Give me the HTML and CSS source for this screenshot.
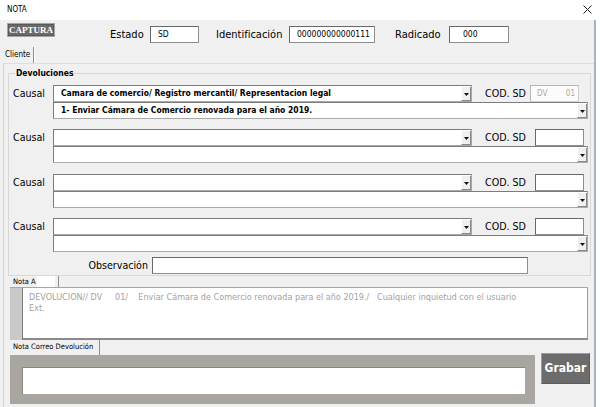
FILE: index.html
```html
<!DOCTYPE html>
<html lang="es">
<head>
<meta charset="utf-8">
<title>NOTA</title>
<link rel="stylesheet" href="styles.css">
</head>
<body>
<div class="window">
  <div class="titlebar">
    <span class="title">NOTA</span>
    <svg class="close" width="9" height="9" viewBox="0 0 9 9"><path d="M0.5 0.5 L8.5 8.5 M8.5 0.5 L0.5 8.5" stroke="#222" stroke-width="1" fill="none"/></svg>
  </div>
  <div class="client">
    <div class="toprow">
      <div class="btn-captura">CAPTURA</div>
      <span class="lbl lbl-estado">Estado</span>
      <div class="field f-estado">SD</div>
      <span class="lbl lbl-id">Identificación</span>
      <div class="field f-id">000000000000111</div>
      <span class="lbl lbl-rad">Radicado</span>
      <div class="field f-rad">000</div>
    </div>
    <div class="tabstrip"><div class="tab tab-cliente">Cliente</div></div>
    <div class="page">
      <div class="group">
        <div class="group-title">Devoluciones</div>

        <div class="causal r1">
          <div class="line1">
            <span class="lbl causal-lbl">Causal</span>
            <div class="combo combo-short"><span class="combo-text">Camara de comercio/ Registro mercantil/ Representacion legal</span><span class="dd"><svg width="5" height="3" viewBox="0 0 5 3"><path d="M0 0 H5 L2.5 3 Z" fill="#111"/></svg></span></div>
            <span class="lbl cod-lbl cod-lbl-first">COD. SD</span>
            <div class="field cod cod-disabled"><span>DV</span><span>01</span></div>
          </div>
          <div class="combo combo-long"><span class="combo-text">1- Enviar Cámara de Comercio renovada para el año 2019.</span><span class="dd"><svg width="5" height="3" viewBox="0 0 5 3"><path d="M0 0 H5 L2.5 3 Z" fill="#111"/></svg></span></div>
        </div>

        <div class="causal r2">
          <div class="line1">
            <span class="lbl causal-lbl">Causal</span>
            <div class="combo combo-short"><span class="combo-text"></span><span class="dd"><svg width="5" height="3" viewBox="0 0 5 3"><path d="M0 0 H5 L2.5 3 Z" fill="#111"/></svg></span></div>
            <span class="lbl cod-lbl">COD. SD</span>
            <div class="field cod"></div>
          </div>
          <div class="combo combo-long"><span class="combo-text"></span><span class="dd"><svg width="5" height="3" viewBox="0 0 5 3"><path d="M0 0 H5 L2.5 3 Z" fill="#111"/></svg></span></div>
        </div>

        <div class="causal r3">
          <div class="line1">
            <span class="lbl causal-lbl">Causal</span>
            <div class="combo combo-short"><span class="combo-text"></span><span class="dd"><svg width="5" height="3" viewBox="0 0 5 3"><path d="M0 0 H5 L2.5 3 Z" fill="#111"/></svg></span></div>
            <span class="lbl cod-lbl">COD. SD</span>
            <div class="field cod"></div>
          </div>
          <div class="combo combo-long"><span class="combo-text"></span><span class="dd"><svg width="5" height="3" viewBox="0 0 5 3"><path d="M0 0 H5 L2.5 3 Z" fill="#111"/></svg></span></div>
        </div>

        <div class="causal r4">
          <div class="line1">
            <span class="lbl causal-lbl">Causal</span>
            <div class="combo combo-short"><span class="combo-text"></span><span class="dd"><svg width="5" height="3" viewBox="0 0 5 3"><path d="M0 0 H5 L2.5 3 Z" fill="#111"/></svg></span></div>
            <span class="lbl cod-lbl">COD. SD</span>
            <div class="field cod"></div>
          </div>
          <div class="combo combo-long"><span class="combo-text"></span><span class="dd"><svg width="5" height="3" viewBox="0 0 5 3"><path d="M0 0 H5 L2.5 3 Z" fill="#111"/></svg></span></div>
        </div>

        <div class="obs-row">
          <span class="lbl obs-lbl">Observación</span>
          <div class="field obs"></div>
        </div>
      </div>

      <div class="tab tab-notaa">Nota A</div>
      <div class="nota-a">
        <div class="nota-a-box">
          <div class="nota-line">DEVOLUCION// DV     01/    Enviar Cámara de Comercio renovada para el año 2019./   Cualquier inquietud con el usuario</div>
          <div class="nota-line">Ext.</div>
        </div>
      </div>

      <div class="bottom">
        <div class="correo">
          <div class="tab tab-correo">Nota Correo Devolución</div>
          <div class="correo-panel"><div class="correo-input"></div></div>
        </div>
        <div class="btn-grabar">Grabar</div>
      </div>
    </div>
  </div>
</div>
</body>
</html>
```
FILE: styles.css
```css
* { box-sizing: border-box; }
html, body { margin: 0; padding: 0; background: #ffffff; }
body {
  font-family: "DejaVu Sans Condensed", "DejaVu Sans", sans-serif;
  font-stretch: condensed;
  color: #000;
}
.window { width: 600px; height: 407px; overflow: hidden; background: #fff; }

.titlebar {
  height: 20px;
  display: flex;
  align-items: center;
  justify-content: space-between;
  padding: 0 8px 0 7px;
  background: #fff;
}
.title { font-size: 8px; line-height: 10px; }
.close { display: block; margin-top: -1px; }

.client {
  width: 596px;
  height: 387px;
  background: #f0f0f0;
  border-right: 2px solid #a6b3c1;
}

.toprow {
  height: 27px;
  display: flex;
  align-items: flex-start;
  padding-left: 7px;
}
.btn-captura {
  margin-top: 3px;
  width: 48px;
  height: 14px;
  background: #6a6a6a;
  border: 1px solid #a4a4a4;
  outline: 1px solid #5a5a5a;
  outline-offset: -2px;
  color: #fff;
  font-family: "Liberation Serif", serif;
  font-weight: bold;
  font-size: 9px;
  line-height: 12px;
  text-align: center;
}
.lbl { font-size: 10.6px; line-height: 17px; white-space: nowrap; }
.toprow .lbl { margin-top: 6px; font-size: 11px; }
.lbl-estado { margin-left: 55px; width: 40px; }
.lbl-id { margin-left: 17px; width: 73px; }
.lbl-rad { margin-left: 20px; width: 54px; }

.field {
  height: 17px;
  background: #fff;
  border: 1px solid #8e8e8e;
  border-top-color: #686868;
  border-left-color: #686868;
  font-size: 8.5px;
  line-height: 15px;
  white-space: nowrap;
}
.toprow .field { margin-top: 6px; }
.f-estado { width: 49px; padding-left: 7px; }
.f-id { width: 86px; padding-left: 7px; }
.f-rad { width: 60px; padding-left: 13px; }

.tabstrip { height: 16px; padding-left: 3px; display: flex; }
.tab { font-size: 8px; white-space: nowrap; }
.tab-cliente {
  width: 31px;
  padding-left: 2px;
  line-height: 16px;
  border-right: 1px solid #8e8e8e;
  box-shadow: 1px 0 0 #ffffff;
}

.page {
  margin-left: 3px;
  width: 591px;
  height: 344px;
  border-left: 1px solid #d2d2d2;
  border-top: 1px solid #dedede;
  padding-top: 9px;
}

.group {
  margin-left: 4px;
  width: 583px;
  border: 1px solid #d8d8d8;
  padding: 0 0 1px 0;
}
.group-title {
  width: fit-content;
  margin: -6px 0 0 6px;
  padding: 0 1px;
  background: #f0f0f0;
  font-weight: bold;
  font-size: 8.5px;
  line-height: 11px;
}

.causal { padding-left: 4px; }
.causal.r1 { margin-top: 6px; }
.causal.r2 { margin-top: 10px; }
.causal.r3 { margin-top: 11px; }
.causal.r4 { margin-top: 10px; }
.line1 { display: flex; align-items: center; height: 17px; }
.causal-lbl { width: 40px; }

.combo {
  height: 17px;
  display: flex;
  align-items: stretch;
  background: #fff;
  border: 1px solid #a9a9a9;
  border-top-color: #7c7c7c;
  border-left-color: #7c7c7c;
}
.combo-short { width: 419px; }
.combo-long { width: 535px; margin-left: 40px; }
.combo-text {
  flex: 1;
  padding-left: 7px;
  font-weight: bold;
  font-size: 8.5px;
  line-height: 15px;
  white-space: nowrap;
  overflow: hidden;
}
.dd {
  width: 10px;
  margin: 1px 0 0 0;
  background: #f0f0f0;
  border-right: 1px solid #8a8a8a;
  border-bottom: 1px solid #8a8a8a;
  border-left: 1px solid #ffffff;
  display: flex;
  align-items: center;
  justify-content: center;
}
.dd svg { display: block; margin-top: 2px; }

.cod-lbl { margin-left: 13px; width: 50px; }
.cod-lbl-first { width: 45px; }
.cod { width: 49px; }
.cod-disabled {
  background: #fbfbfb;
  border-color: #cfcfcf;
  border-top-color: #b8b8b8;
  border-left-color: #b8b8b8;
  color: #a9a9a9;
  font-size: 8px;
  display: flex;
  justify-content: space-between;
  padding: 0 3px 0 6px;
}

.obs-row { display: flex; align-items: center; margin-top: 5px; }
.obs-lbl { width: 139px; text-align: right; margin-right: 4px; }
.obs { width: 376px; }

.tab-notaa {
  margin-left: 6px;
  width: 49px;
  height: 11px;
  padding-left: 3px;
  line-height: 11px;
  font-size: 7.5px;
  border-right: 1px solid #8e8e8e;
  background: linear-gradient(to right, #f0f0f0 27px, #ffffff 27px, #ffffff 45px, #f0f0f0 45px);
}
.nota-a {
  margin-left: 6px;
  width: 578px;
  height: 53px;
  background: #c9c9c9;
  border-top: 1px solid #a6a6a6;
  padding-left: 12px;
}
.nota-a-box {
  height: 52px;
  background: #fff;
  border-left: 1px solid #7e7e7e;
  border-right: 1px solid #9a9a9a;
  border-bottom: 2px solid #8a8a8a;
  padding: 4px 0 0 6px;
  color: #a2a2a2;
  font-size: 9px;
  line-height: 11px;
}
.nota-line { white-space: pre; }

.bottom { display: flex; margin-left: 6px; }
.correo { width: 525px; }
.tab-correo {
  width: 90px;
  height: 15px;
  padding-left: 3px;
  line-height: 14px;
  font-size: 7.5px;
  border-right: 1px solid #8e8e8e;
}
.correo-panel {
  height: 49px;
  background: #a9a5a1;
  padding: 12px 10px 0 12px;
}
.correo-input {
  height: 27px;
  background: #fff;
  border-top: 1px solid #8a8682;
  border-left: 1px solid #8a8682;
}
.btn-grabar {
  margin: 13px 0 0 6px;
  width: 49px;
  height: 31px;
  background: #6c6c6c;
  border: 1px solid #9c9c9c;
  border-right-color: #5c5c5c;
  border-bottom-color: #5c5c5c;
  color: #fff;
  font-weight: bold;
  font-size: 12px;
  line-height: 29px;
  text-align: center;
}
```
